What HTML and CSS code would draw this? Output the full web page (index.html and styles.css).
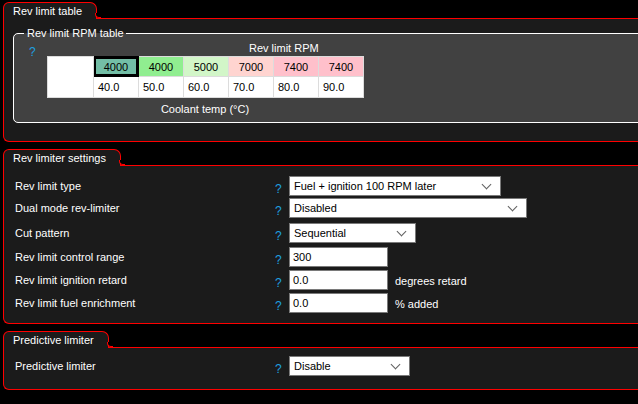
FILE: index.html
```html
<!DOCTYPE html>
<html>
<head>
<meta charset="utf-8">
<link rel="stylesheet" href="styles.css">
</head>
<body>
<div class="panel p1">
  <div class="tab">Rev limit table</div>
  <div class="panel-body">
    <fieldset class="group">
      <legend>Rev limit RPM table</legend>
      <div class="group-head">
        <span class="q">?</span>
        <span class="axis-title">Rev limit RPM</span>
      </div>
      <table class="grid">
        <tr class="rpm">
          <td class="corner" rowspan="2"></td>
          <td class="c1 sel">4000</td>
          <td class="c2">4000</td>
          <td class="c3">5000</td>
          <td class="c4">7000</td>
          <td class="c5">7400</td>
          <td class="c6">7400</td>
        </tr>
        <tr class="temp">
          <td>40.0</td>
          <td>50.0</td>
          <td>60.0</td>
          <td>70.0</td>
          <td>80.0</td>
          <td>90.0</td>
        </tr>
      </table>
      <div class="axis-x">Coolant temp (°C)</div>
    </fieldset>
  </div>
</div>

<div class="panel p2">
  <div class="tab">Rev limiter settings</div>
  <div class="panel-body">
    <div class="row r1">
      <span class="label">Rev limit type</span><span class="q">?</span>
      <div class="select w212"><span>Fuel + ignition 100 RPM later</span><i class="chev"></i></div>
    </div>
    <div class="row r2">
      <span class="label">Dual mode rev-limiter</span><span class="q">?</span>
      <div class="select w238"><span>Disabled</span><i class="chev"></i></div>
    </div>
    <div class="row r3">
      <span class="label">Cut pattern</span><span class="q">?</span>
      <div class="select w127"><span>Sequential</span><i class="chev"></i></div>
    </div>
    <div class="row r4">
      <span class="label">Rev limit control range</span><span class="q">?</span>
      <div class="input">300</div>
    </div>
    <div class="row r5">
      <span class="label">Rev limit ignition retard</span><span class="q">?</span>
      <div class="input">0.0</div><span class="unit">degrees retard</span>
    </div>
    <div class="row r6">
      <span class="label">Rev limit fuel enrichment</span><span class="q">?</span>
      <div class="input">0.0</div><span class="unit">% added</span>
    </div>
  </div>
</div>

<div class="panel p3">
  <div class="tab">Predictive limiter</div>
  <div class="panel-body">
    <div class="row">
      <span class="label">Predictive limiter</span><span class="q">?</span>
      <div class="select w121"><span>Disable</span><i class="chev"></i></div>
    </div>
  </div>
</div>
</body>
</html>
```

FILE: styles.css
```css
html, body {
  margin: 0;
  padding: 0;
  background: #000;
  overflow: hidden;
}
body {
  width: 638px;
  height: 404px;
  padding-top: 2px;
  box-sizing: border-box;
  font-family: "Liberation Sans", Arial, sans-serif;
  font-size: 11px;
  color: #fff;
}

.panel {
  margin-left: 3px;
  width: 660px;
}
.p2 { margin-top: 7px; }
.p3 { margin-top: 7px; }

.tab {
  display: inline-block;
  position: relative;
  z-index: 1;
  height: 16px;
  line-height: 17px;
  padding: 0 14px 0 9px;
  background: #1b1b1b;
  border: 1px solid #ff0000;
  border-bottom: none;
  border-radius: 6px 7px 0 0;
  margin-bottom: -1px;
}
.tab::after {
  content: "";
  position: absolute;
  right: -5px;
  bottom: 1px;
  width: 5px;
  height: 4px;
  border-left: 1px solid #ff0000;
  border-bottom: 1px solid #ff0000;
  border-bottom-left-radius: 4px;
  background: #000;
}

.panel-body {
  background: #1b1b1b;
  border: 1px solid #ff0000;
  border-right: none;
  border-radius: 0 0 0 6px;
}

/* Panel 1 */
.p1 .panel-body {
  padding: 8px 0 18px 9px;
}
.group {
  margin: 0;
  padding: 0 0 5px 0;
  border: 1px solid #ffffff;
  border-radius: 5px;
  background: #414141;
  min-width: 0;
}
.group legend {
  margin-left: 10px;
  padding: 0 2px 0 3px;
  line-height: 13px;
  color: #fff;
}
.group-head {
  display: flex;
  align-items: flex-end;
  height: 16px;
}
.group-head .q {
  margin-left: 15px;
  position: relative;
  top: 3px;
}
.axis-title {
  margin-left: 206px;
  margin-bottom: 2px;
}

.grid {
  margin-left: 33px;
  border-collapse: collapse;
  border: 1px solid #8a8a8a;
  background: #fff;
  color: #000;
}
.grid td {
  width: 45px;
  height: 19px;
  padding: 0;
  border: 1px solid #dcdcdc;
  box-sizing: border-box;
  line-height: 18px;
}
.grid .corner { width: 46px; }
.grid .rpm td { text-align: center; height: 20px; }
.grid .temp td { padding-left: 4px; height: 21px; }
.grid .c1 { background: #73bea6; }
.grid .sel { box-shadow: inset 0 0 0 2px #000; border-color: #000; }
.grid .c2 { background: #90ee90; }
.grid .c3 { background: #d2f6c8; }
.grid .c4 { background: #ffd4d0; }
.grid .c5 { background: #ffc0cb; }
.grid .c6 { background: #ffc0cb; }

.axis-x {
  width: 382px;
  text-align: center;
  margin-top: 5px;
  margin-bottom: 1px;
  line-height: 13px;
}

/* Rows */
.p2 .panel-body { padding: 10px 0 10px 11px; }
.p3 .panel-body { padding: 8px 0 10px 11px; }

.row {
  display: flex;
  align-items: flex-start;
  height: 23px;
}
.row.r1 { height: 22px; }
.row.r2 { height: 25px; }
.row.r3 { height: 24px; }
.row.r4 { height: 23px; }
.row.r5 { height: 23px; }
.row.r6 { height: 20px; }

.label {
  width: 260px;
  line-height: 20px;
  flex: none;
}
.q {
  color: #1ea0e0;
  width: 14px;
  flex: none;
  line-height: 20px;
  padding-top: 3px;
  font-size: 12px;
}
.group-head .q { padding-top: 0; line-height: 14px; }

.select, .input {
  box-sizing: border-box;
  height: 20px;
  background: #fff;
  border: 1px solid #7a7a7a;
  color: #000;
  display: flex;
  align-items: center;
  font-size: 11px;
  flex: none;
}
.select {
  padding-left: 4px;
  justify-content: space-between;
}
.select span { line-height: 18px; }
.chev {
  width: 6px;
  height: 6px;
  border-right: 1px solid #606060;
  border-bottom: 1px solid #606060;
  transform: rotate(45deg);
  margin-right: 10px;
  margin-top: -4px;
}
.w212 { width: 212px; }
.w238 { width: 238px; }
.w127 { width: 127px; }
.w121 { width: 121px; }

.input {
  width: 99px;
  padding-left: 3px;
}
.unit {
  margin-left: 7px;
  line-height: 22px;
}
```
